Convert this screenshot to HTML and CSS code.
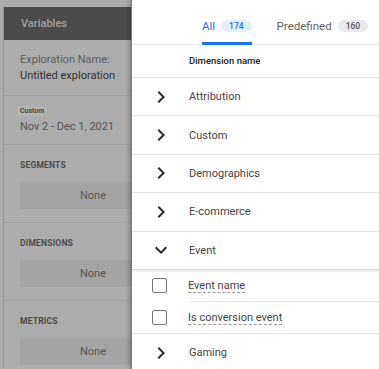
FILE: index.html
```html
<!DOCTYPE html>
<html lang="en">
<head>
    <meta charset="UTF-8">
    <title>Exploration - Dimensions</title>
    <link rel="stylesheet" href="styles.css">
</head>
<body>
    <aside class="drawer">
        <div class="drawer-inner">
            <div class="var-head">Variables</div>

            <div class="var-section name-section">
                <div class="name-label">Exploration Name:</div>
                <div class="name-value">Untitled exploration</div>
            </div>

            <div class="var-section date-section">
                <div class="date-chip">Custom</div>
                <div class="date-value">Nov 2 - Dec 1, 2021</div>
            </div>

            <div class="var-section">
                <div class="var-label">SEGMENTS</div>
                <div class="var-box">None</div>
            </div>

            <div class="var-section">
                <div class="var-label">DIMENSIONS</div>
                <div class="var-box">None</div>
            </div>

            <div class="var-section">
                <div class="var-label">METRICS</div>
                <div class="var-box">None</div>
            </div>
        </div>
    </aside>

    <main class="picker">
        <nav class="tabs">
            <div class="tab active">All <span class="badge">174</span></div>
            <div class="tab">Predefined <span class="badge">160</span></div>
        </nav>

        <div class="col-head">Dimension name</div>

        <div class="row">
            <svg class="chev" viewBox="0 0 24 24"><path d="M10 6L8.59 7.41 13.17 12l-4.58 4.59L10 18l6-6z"/></svg>
            <span>Attribution</span>
        </div>
        <div class="row">
            <svg class="chev" viewBox="0 0 24 24"><path d="M10 6L8.59 7.41 13.17 12l-4.58 4.59L10 18l6-6z"/></svg>
            <span>Custom</span>
        </div>
        <div class="row">
            <svg class="chev" viewBox="0 0 24 24"><path d="M10 6L8.59 7.41 13.17 12l-4.58 4.59L10 18l6-6z"/></svg>
            <span>Demographics</span>
        </div>
        <div class="row">
            <svg class="chev" viewBox="0 0 24 24"><path d="M10 6L8.59 7.41 13.17 12l-4.58 4.59L10 18l6-6z"/></svg>
            <span>E-commerce</span>
        </div>
        <div class="row open">
            <svg class="chev" viewBox="0 0 24 24"><path d="M16.59 8.59L12 13.17 7.41 8.59 6 10l6 6 6-6z"/></svg>
            <span>Event</span>
        </div>
        <div class="sub-row">
            <span class="check"></span>
            <span class="sub-label">Event name</span>
        </div>
        <div class="sub-row last">
            <span class="check"></span>
            <span class="sub-label">Is conversion event</span>
        </div>
        <div class="row">
            <svg class="chev" viewBox="0 0 24 24"><path d="M10 6L8.59 7.41 13.17 12l-4.58 4.59L10 18l6-6z"/></svg>
            <span>Gaming</span>
        </div>
    </main>
</body>
</html>
```

FILE: styles.css
```css
html, body {
    margin: 0;
    width: 379px;
    height: 369px;
    overflow: hidden;
}
body {
    display: flex;
    font-family: Roboto, "Noto Sans", sans-serif;
    background: #fff;
}

/* left drawer, dimmed by the dialog scrim */
.drawer {
    width: 128px;
    flex: none;
    padding: 7px 0 0 3px;
    background: #acacac;
    overflow: hidden;
}
.drawer-inner {
    height: 100%;
    border-left: 1px solid #959595;
}
.var-head {
    height: 33px;
    line-height: 33px;
    padding-left: 17px;
    background: #4b4b4b;
    color: #a3a3a3;
    font-size: 11px;
    font-weight: 500;
}
.var-section {
    padding: 14px 0 13px 16px;
    border-bottom: 1px solid #a2a2a2;
}
.name-section {
    padding-top: 12px;
    padding-bottom: 11px;
}
.name-label {
    font-size: 11px;
    line-height: 16px;
    color: #5c5c5c;
}
.name-value {
    font-size: 11px;
    line-height: 16px;
    color: #2f2f2f;
}
.date-section {
    padding-top: 10px;
    padding-bottom: 9px;
}
.date-chip {
    width: fit-content;
    height: 10px;
    line-height: 10px;
    padding: 0 3px;
    margin-left: -3px;
    background: #b3b3b3;
    border-radius: 2px;
    font-size: 7px;
    font-weight: 700;
    color: #4a4a4a;
}
.date-value {
    margin-top: 3px;
    font-size: 11px;
    line-height: 16px;
    color: #555;
}
.var-label {
    font-size: 8.5px;
    line-height: 12px;
    font-weight: 700;
    color: #4a4a4a;
    letter-spacing: 0.2px;
}
.var-box {
    margin-top: 11px;
    height: 27px;
    line-height: 27px;
    padding-right: 25px;
    text-align: right;
    background: #a4a4a4;
    border-radius: 3px 0 0 3px;
    font-size: 11px;
    color: #555;
}
.var-section:last-child {
    border-bottom: none;
}

/* dimension picker dialog */
.picker {
    flex: 1;
    background: #fff;
    border-left: 1px solid #7a7a7a;
    box-shadow: -2px 0 4px rgba(0, 0, 0, 0.25);
    color: #444;
    font-size: 11px;
}
.tabs {
    display: flex;
    height: 45px;
    padding-left: 70px;
    border-bottom: 1px solid #e6e6e6;
    box-sizing: border-box;
}
.tab {
    display: flex;
    align-items: center;
    gap: 6px;
    height: 45px;
    box-sizing: border-box;
    padding-top: 10px;
    margin-right: 25px;
    border-bottom: 3px solid transparent;
    font-size: 11.5px;
    color: #5f6368;
}
.tab.active {
    color: #1a73e8;
    border-bottom-color: #1a73e8;
    border-radius: 0 0 1px 1px;
}
.badge {
    display: inline-block;
    height: 12px;
    line-height: 12px;
    padding: 0 8px;
    border-radius: 6px;
    background: #e8eaed;
    color: #555;
    font-size: 8.5px;
    font-weight: 500;
}
.tab.active .badge {
    background: #e6efff;
    color: #1a73e8;
}
.col-head {
    height: 33px;
    line-height: 32px;
    padding-left: 57px;
    border-bottom: 1px solid #e6e6e6;
    box-sizing: border-box;
    font-size: 9.5px;
    font-weight: 500;
    color: #222;
}
.row {
    display: flex;
    align-items: center;
    height: 38.4px;
    box-sizing: border-box;
    border-bottom: 1px solid #e6e6e6;
}
.row.open {
    border-bottom-color: #d8d8d8;
    box-shadow: 0 1px 2px rgba(0, 0, 0, 0.12);
}
.chev {
    width: 24px;
    height: 24px;
    margin: 0 16px 0 17px;
    fill: #2a2a2a;
}
.sub-row {
    display: flex;
    align-items: center;
    height: 32px;
    box-sizing: border-box;
    position: relative;
}
.sub-row::after {
    content: "";
    position: absolute;
    left: 57px;
    right: 0;
    bottom: 0;
    border-bottom: 1px solid #e6e6e6;
}
.sub-row.last::after {
    left: 0;
}
.check {
    width: 15px;
    height: 15px;
    margin: 0 21px 0 20px;
    box-sizing: border-box;
    border: 1.5px solid #757575;
    border-radius: 2px;
}
.sub-label {
    line-height: 13px;
    border-bottom: 1px dashed #999;
}
```
